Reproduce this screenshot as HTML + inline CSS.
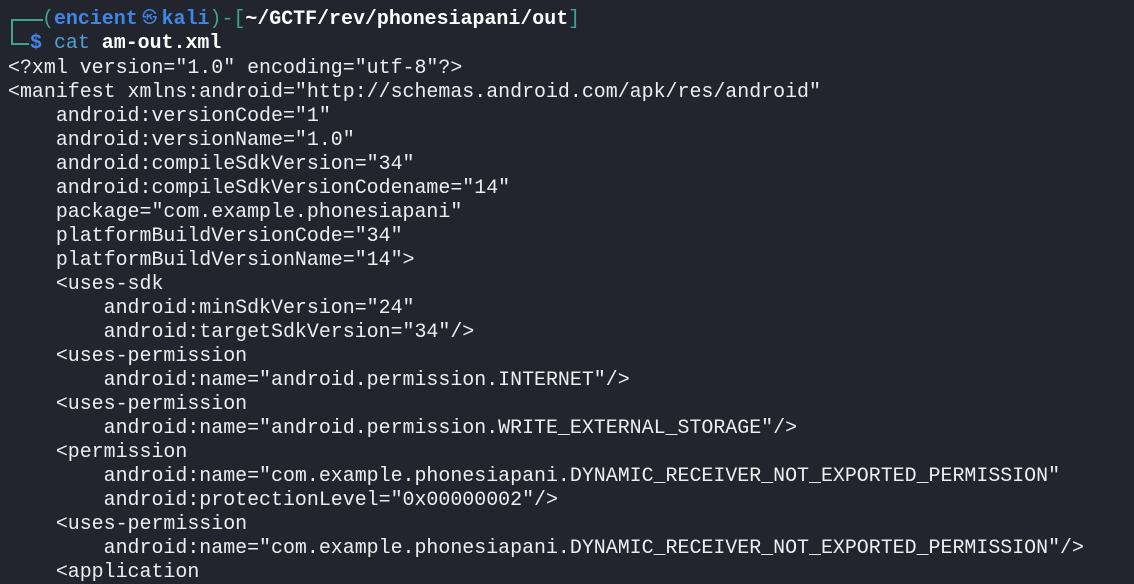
<!DOCTYPE html>
<html><head><meta charset="utf-8"><style>
html,body{margin:0;padding:0;background:#23252e;width:1134px;height:584px;overflow:hidden}
.t{position:absolute;left:0;top:2px;font-family:"Liberation Mono","DejaVu Sans Mono",monospace;font-size:19.93px;line-height:24px;color:#eceff1;white-space:pre}
.l{position:absolute;white-space:pre}
.g{color:#3fa38f}.b{color:#3e86e8;font-weight:bold}.w{color:#fff;font-weight:bold}.c{color:#4aa3d8}
.box{position:absolute}
.sym{display:inline-block;width:24px;text-align:center;font-size:15px;font-weight:normal;overflow:hidden;vertical-align:top}
</style></head><body>
<div class="box" style="left:11px;top:19px;width:30px;height:24px;border-left:2px solid #3fa38f;border-top:2px solid #3fa38f"></div>
<div class="box" style="left:11px;top:43px;width:18px;height:0;border-top:2px solid #3fa38f"></div>
<div class="t">
<div class="l" style="left:42px;top:5px"><span class="g">(</span><span class="b">encient<span class="sym">㉿</span>kali</span><span class="g">)-[</span><span class="w">~/GCTF/rev/phonesiapani/out</span><span class="g">]</span></div>
<div class="l" style="left:30px;top:29px"><span class="b">$</span> <span class="c">cat</span> <span class="w">am-out.xml</span></div>
<div class="l" style="left:8px;top:54px">&lt;?xml version="1.0" encoding="utf-8"?&gt;
&lt;manifest xmlns:android="http://schemas.android.com/apk/res/android"
    android:versionCode="1"
    android:versionName="1.0"
    android:compileSdkVersion="34"
    android:compileSdkVersionCodename="14"
    package="com.example.phonesiapani"
    platformBuildVersionCode="34"
    platformBuildVersionName="14"&gt;
    &lt;uses-sdk
        android:minSdkVersion="24"
        android:targetSdkVersion="34"/&gt;
    &lt;uses-permission
        android:name="android.permission.INTERNET"/&gt;
    &lt;uses-permission
        android:name="android.permission.WRITE_EXTERNAL_STORAGE"/&gt;
    &lt;permission
        android:name="com.example.phonesiapani.DYNAMIC_RECEIVER_NOT_EXPORTED_PERMISSION"
        android:protectionLevel="0x00000002"/&gt;
    &lt;uses-permission
        android:name="com.example.phonesiapani.DYNAMIC_RECEIVER_NOT_EXPORTED_PERMISSION"/&gt;
    &lt;application</div>
</div>
</body></html>
